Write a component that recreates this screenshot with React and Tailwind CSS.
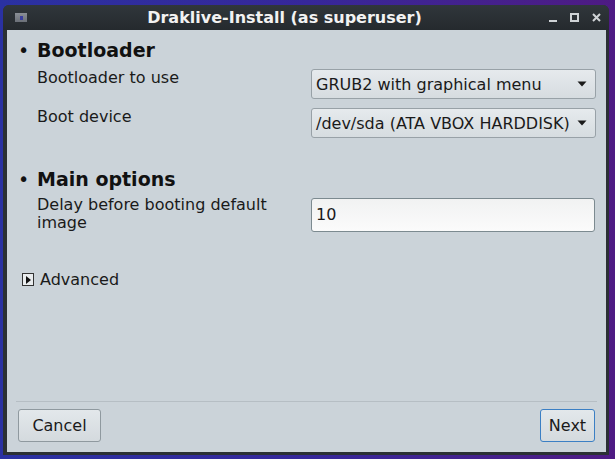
const font = { fontFamily: '"DejaVu Sans", "Liberation Sans", sans-serif' };

const SelectBox = ({ value }) => (
  <div className="mt-[1px] flex h-[30px] w-[285px] items-center justify-between rounded-[3px] border border-[#98a1a7] bg-gradient-to-b from-[#e6eaed] to-[#d6dce0] pl-[4px] pr-[8px] text-[16px] leading-[19px] text-[#1a1a1a]">
    <span className="whitespace-nowrap">{value}</span>
    <svg width="10" height="6" viewBox="0 0 10 6" className="ml-[2px] shrink-0">
      <path d="M0.5 0.5 L9.5 0.5 L5 5.5 Z" fill="#1a1a1a" />
    </svg>
  </div>
);

const Heading = ({ children, className = "" }) => (
  <div className={`flex items-baseline text-[19px] font-bold leading-[23px] text-[#111] ${className}`}>
    <span className="-ml-[4px] w-[19px] font-normal">•</span>
    <span>{children}</span>
  </div>
);

export default function App() {
  return (
    <div
      className="h-[459px] w-[615px] overflow-hidden bg-gradient-to-r from-[#2a31a2] via-[#36279a] to-[#4e1a83] pl-[3px] pt-[5px]"
      style={font}
    >
      <div className="flex h-[450px] w-[606px] flex-col rounded-t-[6px] bg-[#2b3034]">
        {/* title bar */}
        <div className="flex h-[25px] shrink-0 items-center rounded-t-[6px] bg-gradient-to-b from-[#30363b] to-[#252a2e]">
          <div className="flex w-[24px] justify-end">
            <div className="flex h-[9px] w-[12px] items-center justify-center bg-gradient-to-b from-[#8a8f96] to-[#6b7078]">
              <div className="h-[4px] w-[3px] bg-[#3a3fa0]" />
            </div>
          </div>
          <div className="flex-1 pr-[3px] text-center text-[16px] font-bold leading-[25px] text-[#f2f2f2]">
            Draklive-Install (as superuser)
          </div>
          <div className="flex w-[64px] items-center gap-[13px] pl-[4px]">
            <div className="mt-[7px] h-[2px] w-[8px] bg-[#cfd3d6]" />
            <div className="h-[9px] w-[9px] border-[2px] border-[#cfd3d6]" />
            <svg width="9" height="9" viewBox="0 0 9 9">
              <path d="M1 1 L8 8 M8 1 L1 8" stroke="#cfd3d6" strokeWidth="2" />
            </svg>
          </div>
        </div>

        {/* content */}
        <div className="mb-[3px] ml-[4px] mr-[3px] flex flex-1 flex-col bg-[#cbd3d9] text-[#1a1a1a]">
          <div className="flex-1 pl-[15px] pt-[9px]">
            <Heading>Bootloader</Heading>
            <div className="mt-[6px] flex flex-col gap-[8px] pl-[15px]">
              <div className="flex items-start">
                <div className="w-[274px] text-[16px] leading-[19px]">Bootloader to use</div>
                <SelectBox value="GRUB2 with graphical menu" />
              </div>
              <div className="flex items-start">
                <div className="w-[274px] text-[16px] leading-[19px]">Boot device</div>
                <SelectBox value="/dev/sda (ATA VBOX HARDDISK)" />
              </div>
            </div>

            <Heading className="mt-[30px]">Main options</Heading>
            <div className="mt-[5px] flex items-start pl-[15px]">
              <div className="w-[274px] pr-[20px] text-[16px] leading-[18px]">
                Delay before booting default image
              </div>
              <div className="mt-[2px] flex h-[34px] w-[284px] items-center rounded-[3px] border border-[#7c8a90] bg-gradient-to-b from-[#f1f2f2] to-[#fbfbfb] pl-[4px] text-[16px]">
                10
              </div>
            </div>

            <div className="mt-[38px] flex items-center text-[16px] leading-[19px]">
              <div className="mr-[6px] flex h-[13px] w-[12px] items-center justify-center border border-[#333] bg-[#e9ecee]">
                <svg width="5" height="8" viewBox="0 0 5 8">
                  <path d="M0 0 L5 4 L0 8 Z" fill="#111" />
                </svg>
              </div>
              <span>Advanced</span>
            </div>
          </div>

          {/* footer */}
          <div className="mx-[9px] border-t border-[#b6bec4]" />
          <div className="flex justify-between px-[11px] pb-[10px] pt-[7px]">
            <button className="h-[33px] w-[83px] rounded-[3px] border border-[#8f999f] bg-gradient-to-b from-[#e3e8eb] to-[#d4dade] text-[16px] text-[#1a1a1a]">
              Cancel
            </button>
            <button className="h-[33px] w-[55px] rounded-[3px] border border-[#3b7fc4] bg-gradient-to-b from-[#e3e8eb] to-[#d4dade] text-[16px] text-[#1a1a1a]">
              Next
            </button>
          </div>
        </div>
      </div>
    </div>
  );
}
